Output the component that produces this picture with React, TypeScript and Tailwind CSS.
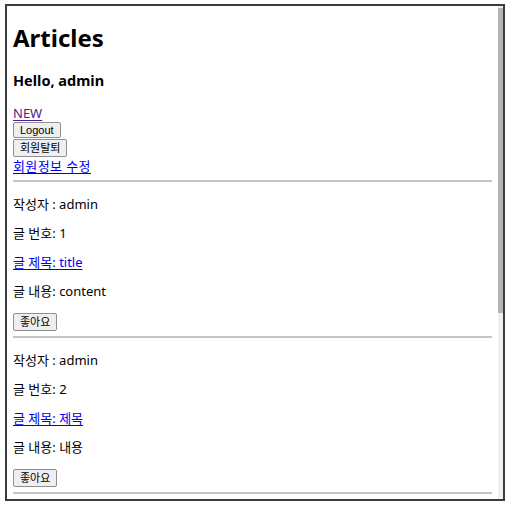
import React from "react";

const body = { fontFamily: '"Noto Sans", "Noto Sans CJK KR", sans-serif' };
const btnFont = { fontFamily: '"Liberation Sans", "Noto Sans CJK KR", sans-serif' };

function Btn({ children, h }: { children: React.ReactNode; h: string }) {
  return (
    <div className="flex">
      <button
        style={btnFont}
        className={`${h} px-[6px] flex items-center bg-[#efefef] border border-[#8f8f8f] rounded-[2px] text-[11px] leading-none text-black`}
      >
        {children}
      </button>
    </div>
  );
}

const articles = [
  { id: 1, title: "title", content: "content" },
  { id: 2, title: "제목", content: "내용" },
];

export default function App() {
  return (
    <div className="w-[512px] h-[508px] bg-white pt-[4px] pl-[5px]" style={body}>
      <div className="w-[500px] h-[497px] border-2 border-[#3c3c3c] flex overflow-hidden">
        <div className="flex-1 px-[6px] flex flex-col text-[13px] text-black">
          <div className="mt-[17px] h-[30px] leading-[30px] text-[24px] font-bold">Articles</div>
          <div className="mt-[17px] h-[20px] leading-[20px] text-[14.5px] font-bold">Hello, admin</div>
          <div className="mt-[15px] h-[16px] leading-[16px]">
            <a className="text-[#551a8b] underline underline-offset-2">NEW</a>
          </div>
          <div className="mt-[1px]">
            <Btn h="h-[16px]">Logout</Btn>
          </div>
          <div className="mt-[1px]">
            <Btn h="h-[18px]">회원탈퇴</Btn>
          </div>
          <div className="mt-[1px] h-[16px] leading-[16px]">
            <a className="text-[#0000ee] underline underline-offset-2 tracking-[0.4px]">회원정보 수정</a>
          </div>
          <div className="mt-[6px] h-[2px] bg-[#c4c4c4]" />
          {articles.map((a) => (
            <div key={a.id} className="flex flex-col">
              <div className="mt-[14px] h-[16px] leading-[16px]">작성자 : admin</div>
              <div className="mt-[13px] h-[16px] leading-[16px]">글 번호: {a.id}</div>
              <div className="mt-[13px] h-[16px] leading-[16px]">
                <a className="text-[#0000ee] underline underline-offset-2">글 제목: {a.title}</a>
              </div>
              <div className="mt-[13px] h-[16px] leading-[16px]">글 내용: {a.content}</div>
              <div className="mt-[14px]">
                <Btn h="h-[18px]">좋아요</Btn>
              </div>
              <div className="mt-[5px] h-[2px] bg-[#c4c4c4]" />
            </div>
          ))}
        </div>
        <div className="w-[5px] bg-[#f0f0f0] flex flex-col">
          <div className="mt-[2px] h-[305px] bg-[#b5b5b5]" />
        </div>
      </div>
    </div>
  );
}
